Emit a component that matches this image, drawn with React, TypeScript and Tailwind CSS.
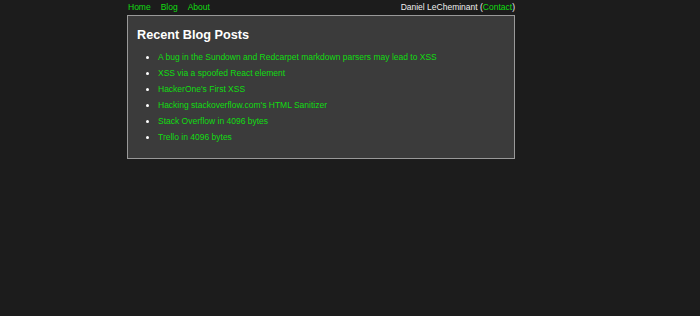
import React from "react";

const posts = [
  "A bug in the Sundown and Redcarpet markdown parsers may lead to XSS",
  "XSS via a spoofed React element",
  "HackerOne's First XSS",
  "Hacking stackoverflow.com's HTML Sanitizer",
  "Stack Overflow in 4096 bytes",
  "Trello in 4096 bytes",
];

export default function App() {
  return (
    <div className="min-h-[316px] w-full bg-[#1c1c1c] text-[#eeeeee] font-['Liberation_Sans',Arial,sans-serif] text-[8.5px]">
      <div className="ml-[127px] w-[388px]">
        <div className="flex h-[15px] items-center justify-between pl-[1px]">
          <div className="flex gap-[10px] text-[#11dd11]">
            <a>Home</a>
            <a>Blog</a>
            <a>About</a>
          </div>
          <div>
            Daniel LeCheminant (<a className="text-[#11dd11]">Contact</a>)
          </div>
        </div>
        <div className="h-[144px] border border-[#999999] bg-[#3b3b3b] px-[9px] pt-[11px]">
          <h2 className="text-[12.7px] font-bold leading-[16px] text-white">Recent Blog Posts</h2>
          <ul className="mt-[6px] list-disc pl-[21px] marker:text-white">
            {posts.map((p) => (
              <li key={p} className="h-[16px] leading-[16px] text-[#11dd11]">
                <a>{p}</a>
              </li>
            ))}
          </ul>
        </div>
      </div>
    </div>
  );
}
